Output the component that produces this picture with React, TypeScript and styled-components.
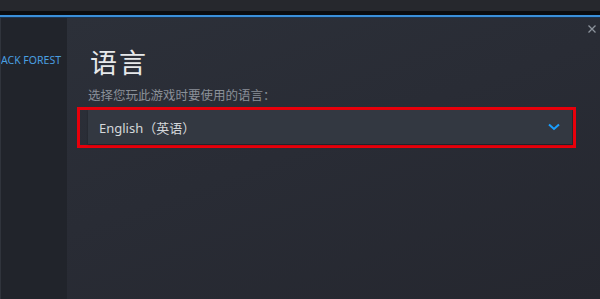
import styled, { createGlobalStyle } from "styled-components";

const Global = createGlobalStyle`
  html, body {
    margin: 0;
    padding: 0;
    background: #23262d;
    overflow: hidden;
  }
  body {
    font-family: "Noto Sans", "Noto Sans CJK SC", "Liberation Sans", sans-serif;
  }
`;

const Page = styled.div`
  width: 600px;
  height: 299px;
  display: flex;
  flex-direction: column;
  background: #23262d;
`;

const TopBar = styled.div`
  height: 11px;
  background: #26282d;
`;

const BlackStrip = styled.div`
  height: 4px;
  background: #0a0c0f;
`;

const BlueLine = styled.div`
  height: 2px;
  background: #3a8fd9;
  border-bottom: 1px solid #1d3550;
`;

const Body = styled.div`
  flex: 1;
  display: flex;
  min-height: 0;
`;

const Sidebar = styled.div`
  width: 67px;
  flex-shrink: 0;
  background: #21242b;
  border-left: 1px solid #30343c;
  overflow: hidden;
  padding-top: 35px;
  box-sizing: border-box;
`;

const SideLink = styled.div`
  font-size: 10.5px;
  color: #4a9fe0;
  white-space: nowrap;
`;

const Panel = styled.div`
  position: relative;
  flex: 1;
  background: linear-gradient(160deg, #2c3039 0%, #292c35 45%, #25272f 100%);
  padding: 27px 24px 0 23px;
  box-sizing: border-box;
`;

const Close = styled.div`
  position: absolute;
  top: 6px;
  right: 3px;
  width: 10px;
  height: 10px;
  display: flex;
  align-items: center;
  justify-content: center;
`;

const Title = styled.h1`
  margin: 0;
  font-size: 27px;
  font-weight: 400;
  color: #e6e8ea;
  line-height: 35px;
  letter-spacing: 2px;
`;

const Hint = styled.div`
  margin-top: 8px;
  margin-left: -2px;
  font-size: 12.5px;
  color: #8a9099;
  line-height: 16px;
`;

const Highlight = styled.div`
  margin-top: 3px;
  margin-left: -13px;
  width: 499px;
  border: 3px solid #e8000b;
  box-sizing: border-box;
  padding: 0 1px 1px 8px;
`;

const Select = styled.div`
  height: 34px;
  background: #333841;
  display: flex;
  align-items: center;
  justify-content: space-between;
  padding: 0 12px 0 11px;
  box-shadow: 0 1px 2px rgba(0, 0, 0, 0.25);
`;

const Value = styled.span`
  font-size: 13px;
  color: #d4d7da;
`;

export default function App() {
  return (
    <Page>
      <Global />
      <TopBar />
      <BlackStrip />
      <BlueLine />
      <Body>
        <Sidebar>
          <SideLink>ACK FOREST</SideLink>
        </Sidebar>
        <Panel>
          <Close>
            <svg width="8" height="8" viewBox="0 0 8 8">
              <path d="M0.5 0.5 L7.5 7.5 M7.5 0.5 L0.5 7.5" stroke="#8c939c" strokeWidth="1.3" />
            </svg>
          </Close>
          <Title>语言</Title>
          <Hint>选择您玩此游戏时要使用的语言：</Hint>
          <Highlight>
            <Select>
              <Value>English（英语）</Value>
              <svg width="12" height="8" viewBox="0 0 12 8">
                <path d="M1 1.5 L6 6 L11 1.5" fill="none" stroke="#1a9fff" strokeWidth="2" />
              </svg>
            </Select>
          </Highlight>
        </Panel>
      </Body>
    </Page>
  );
}
